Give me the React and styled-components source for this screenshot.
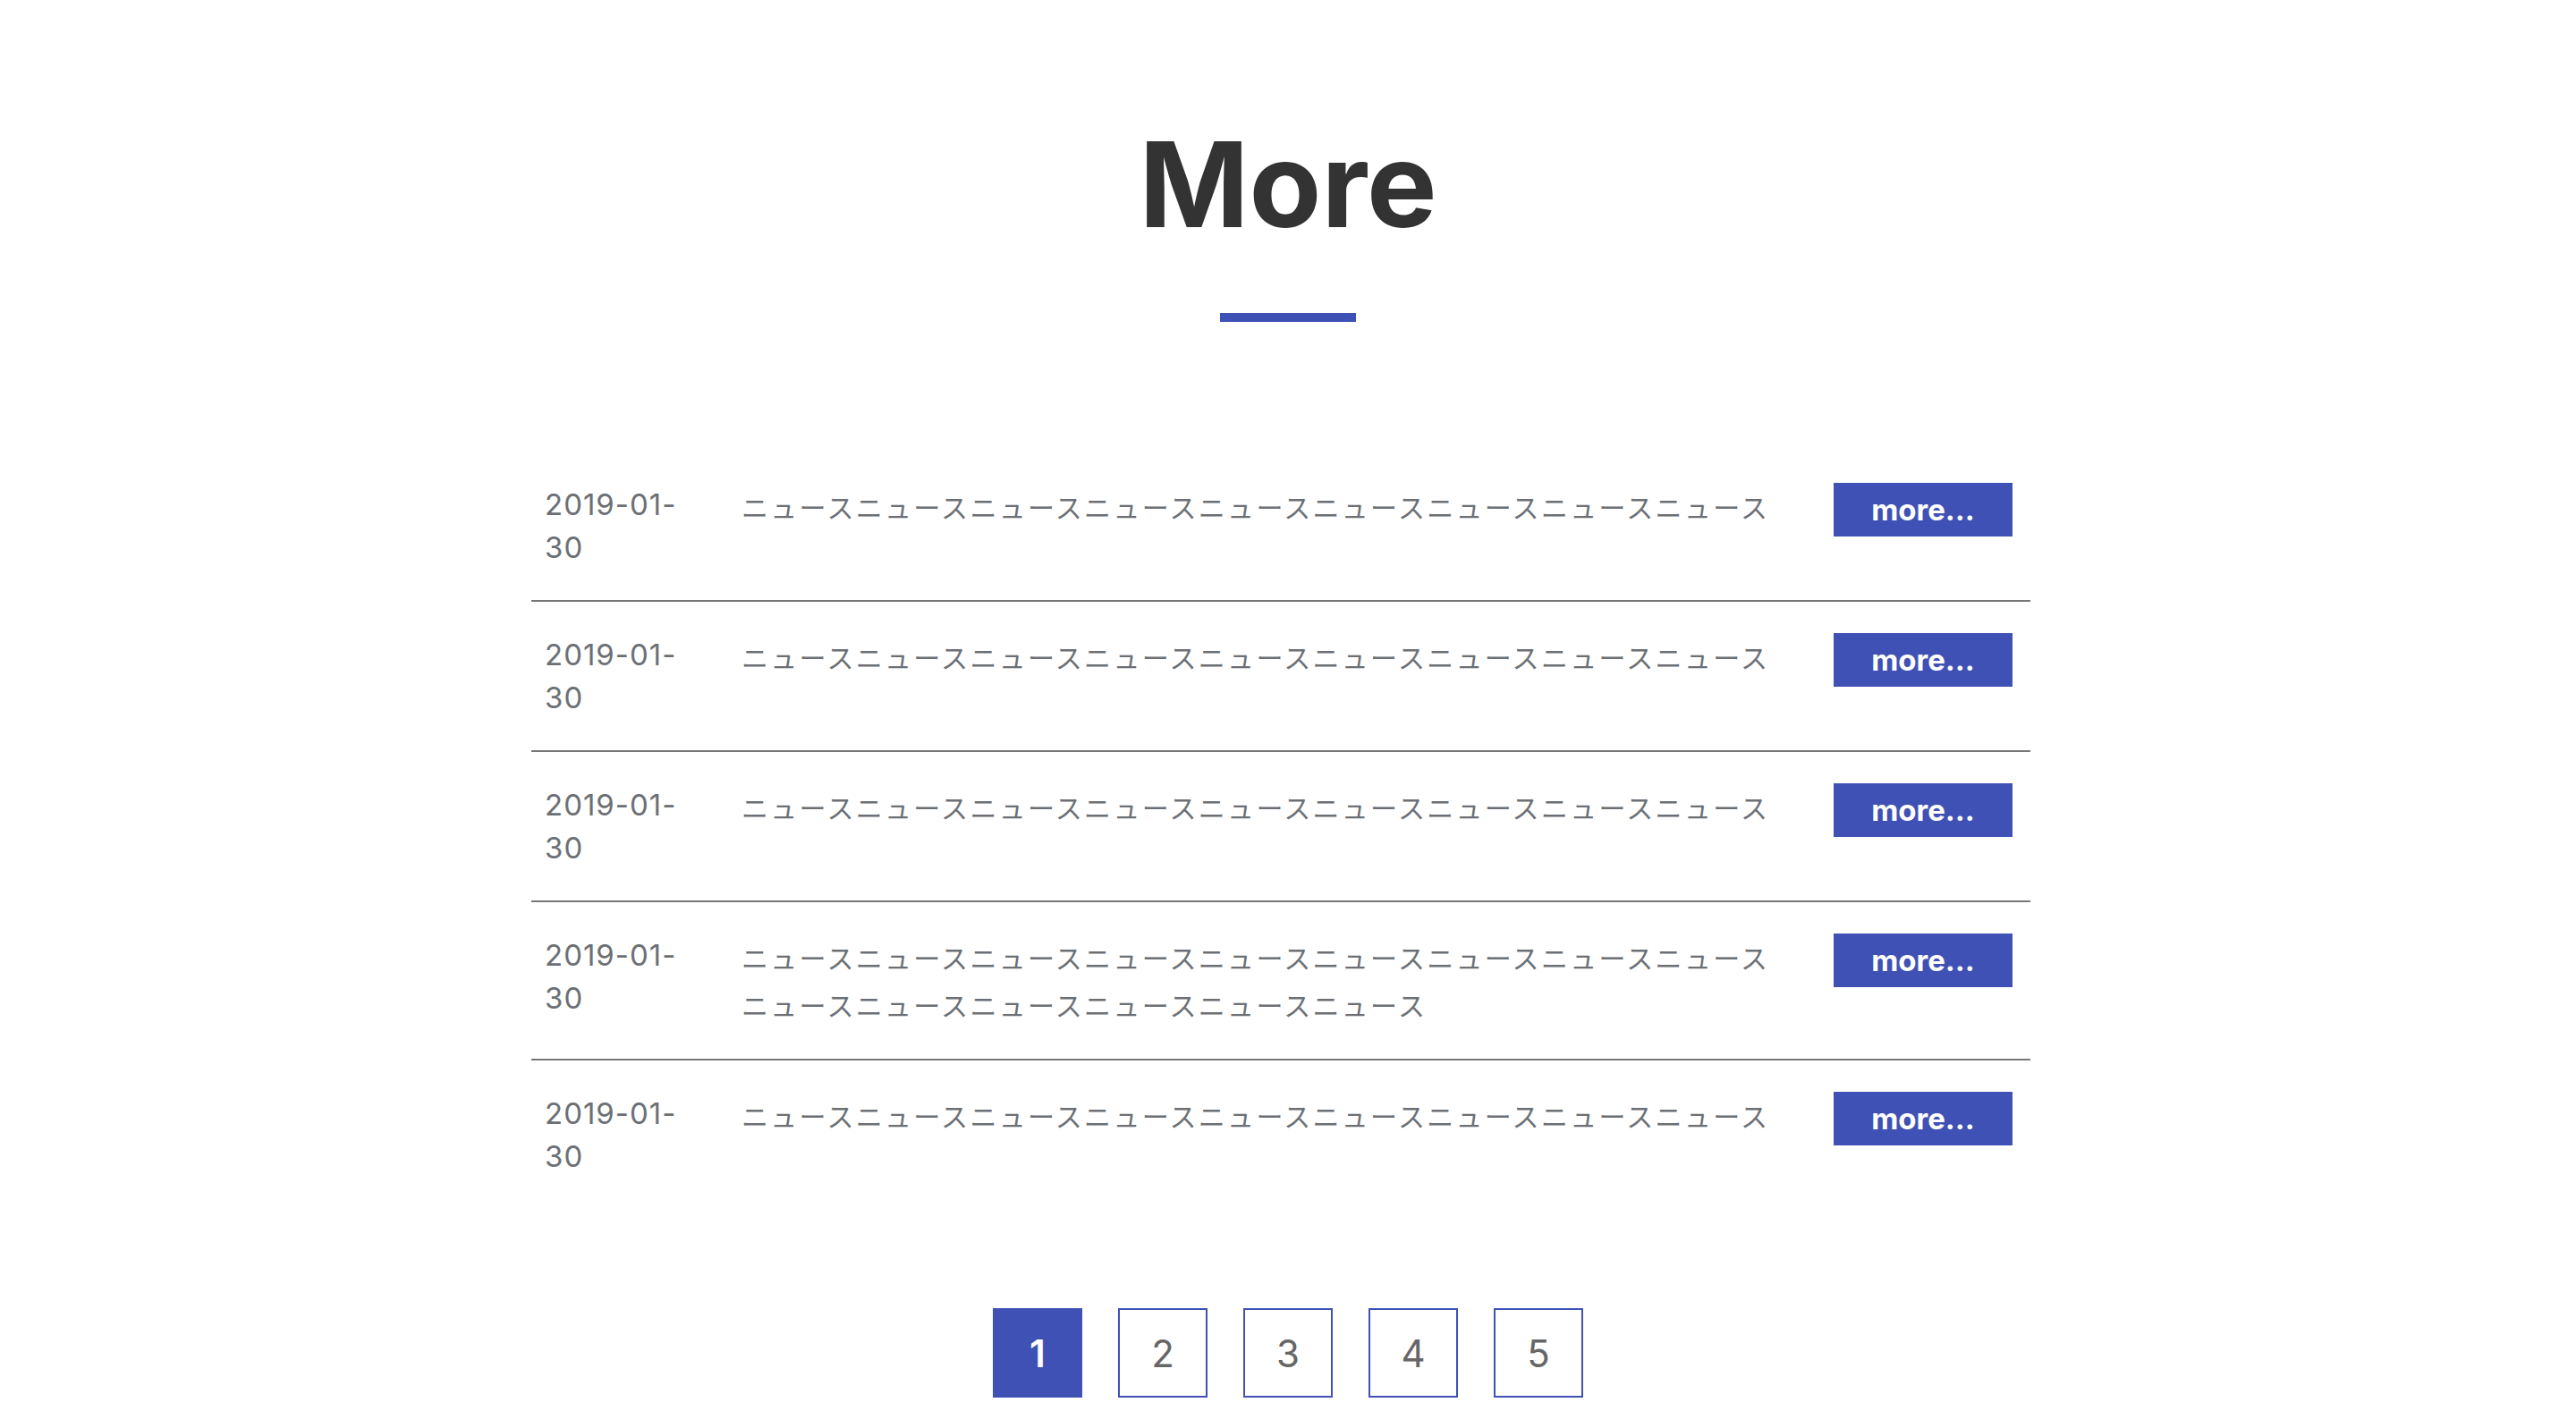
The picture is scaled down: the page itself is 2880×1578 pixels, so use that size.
import styled, { createGlobalStyle } from 'styled-components';

const GlobalStyle = createGlobalStyle`
  html, body {
    margin: 0;
    padding: 0;
    background: #fff;
  }
  body {
    font-family: Inter, "Noto Sans CJK JP", sans-serif;
  }
`;

const Page = styled.main`
  padding: 140px 0 10px;
`;

const Title = styled.h1`
  margin: 0;
  font-family: Inter, "Noto Sans CJK JP", sans-serif;
  font-size: 132px;
  font-weight: 700;
  line-height: 1;
  color: #333;
  text-align: center;
`;

const TitleBar = styled.div`
  width: 152px;
  height: 10px;
  margin: 78px auto 0;
  background: #3f51b5;
`;

const NewsList = styled.ul`
  list-style: none;
  width: 1676px;
  margin: 145px 0 0 calc(50% - 846px);
  padding: 0;
`;

const NewsRow = styled.li`
  display: flex;
  align-items: flex-start;
  padding: 35px 20px 35px 15px;
  border-bottom: 2px solid #777;

  &:last-child {
    border-bottom: none;
  }
`;

const NewsDate = styled.time`
  flex: 0 0 160px;
  margin-right: 60px;
  font-size: 33px;
  letter-spacing: 1px;
  line-height: 48px;
  color: #6c7075;
`;

const NewsText = styled.p`
  width: 1175px;
  margin: 0;
  font-family: "Noto Sans CJK JP", sans-serif;
  font-size: 30px;
  letter-spacing: 2.3px;
  line-height: 52.5px;
  color: #6c7075;
`;

const MoreButton = styled.a`
  display: flex;
  align-items: center;
  justify-content: center;
  width: 200px;
  height: 60px;
  margin-left: auto;
  background: #3f51b5;
  color: #fff;
  font-size: 33px;
  font-weight: 700;
  text-decoration: none;
`;

const Pagination = styled.nav`
  display: flex;
  justify-content: center;
  gap: 40px;
  margin-top: 111px;
`;

const PageLink = styled.a`
  display: flex;
  align-items: center;
  justify-content: center;
  width: 100px;
  height: 100px;
  box-sizing: border-box;
  border: 2px solid #3f51b5;
  background: ${p => (p.$active ? '#3f51b5' : '#fff')};
  color: ${p => (p.$active ? '#fff' : '#666')};
  font-size: 42px;
  font-weight: ${p => (p.$active ? 600 : 400)};
  text-decoration: none;
`;

const short = 'ニュース'.repeat(9);
const long = 'ニュース'.repeat(15);

const news = [short, short, short, long, short];

export default function App() {
  return (
    <>
      <GlobalStyle />
      <Page>
        <Title>More</Title>
        <TitleBar />

        <NewsList>
          {news.map((text, i) => (
            <NewsRow key={i}>
              <NewsDate dateTime="2019-01-30">
                2019-01-<wbr />30
              </NewsDate>
              <NewsText>{text}</NewsText>
              <MoreButton href="#">more...</MoreButton>
            </NewsRow>
          ))}
        </NewsList>

        <Pagination>
          {[1, 2, 3, 4, 5].map(n => (
            <PageLink key={n} href="#" $active={n === 1}>
              {n}
            </PageLink>
          ))}
        </Pagination>
      </Page>
    </>
  );
}
